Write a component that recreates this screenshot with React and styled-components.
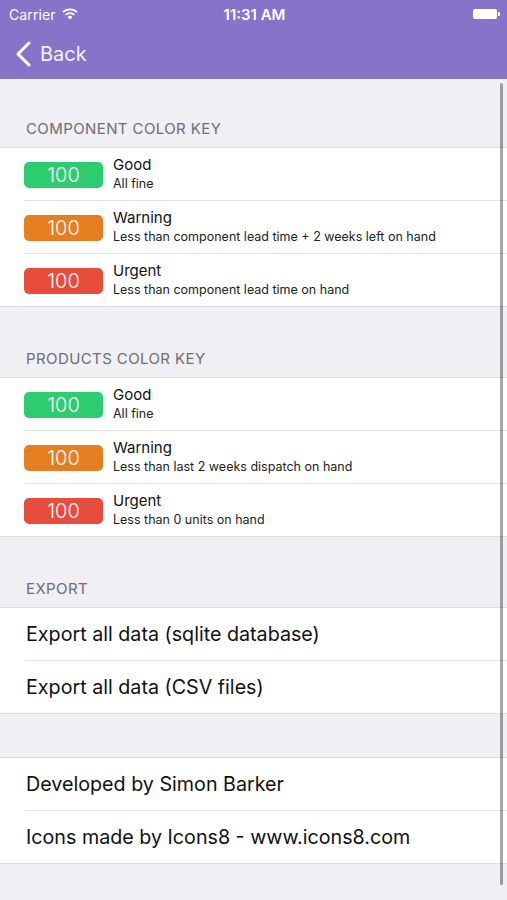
import styled, { createGlobalStyle } from "styled-components";

const GlobalStyle = createGlobalStyle`
  body {
    margin: 0;
    background: #efeff4;
    font-family: Inter, "Liberation Sans", sans-serif;
  }
`;

const componentKeys = [
  { color: "#2ecc71", title: "Good", text: "All fine" },
  {
    color: "#e67e22",
    title: "Warning",
    text: "Less than component lead time + 2 weeks left on hand",
  },
  { color: "#e74c3c", title: "Urgent", text: "Less than component lead time on hand" },
];

const productKeys = [
  { color: "#2ecc71", title: "Good", text: "All fine" },
  { color: "#e67e22", title: "Warning", text: "Less than last 2 weeks dispatch on hand" },
  { color: "#e74c3c", title: "Urgent", text: "Less than 0 units on hand" },
];

export default function App() {
  return (
    <Screen>
      <GlobalStyle />
      <Header>
        <StatusBar>
          <Carrier>
            Carrier
            <svg width="16" height="12" viewBox="0 0 16 12">
              <path
                d="M1 4.2 A10 10 0 0 1 15 4.2"
                stroke="#fff"
                strokeWidth="1.8"
                fill="none"
              />
              <path
                d="M3.6 6.8 A6.4 6.4 0 0 1 12.4 6.8"
                stroke="#fff"
                strokeWidth="1.8"
                fill="none"
              />
              <path d="M8 11.5 L5.6 9 A3.4 3.4 0 0 1 10.4 9 Z" fill="#fff" />
            </svg>
          </Carrier>
          <Time>11:31 AM</Time>
          <Battery>
            <BatteryBody />
            <BatteryTip />
          </Battery>
        </StatusBar>
        <NavBar>
          <svg width="17" height="26" viewBox="0 0 17 26">
            <path
              d="M14 2 L3 13 L14 24"
              stroke="#fff"
              strokeWidth="3"
              fill="none"
              strokeLinecap="round"
              strokeLinejoin="round"
            />
          </svg>
          <BackText>Back</BackText>
        </NavBar>
      </Header>

      <Content>
        <SectionHeader $top={40}>Component color key</SectionHeader>
        <Group>
          {componentKeys.map((k) => (
            <KeyRow key={k.title}>
              <Badge $color={k.color}>100</Badge>
              <KeyText>
                <KeyTitle>{k.title}</KeyTitle>
                <KeySub>{k.text}</KeySub>
              </KeyText>
            </KeyRow>
          ))}
        </Group>

        <SectionHeader $top={42}>Products color key</SectionHeader>
        <Group>
          {productKeys.map((k) => (
            <KeyRow key={k.title}>
              <Badge $color={k.color}>100</Badge>
              <KeyText>
                <KeyTitle>{k.title}</KeyTitle>
                <KeySub>{k.text}</KeySub>
              </KeyText>
            </KeyRow>
          ))}
        </Group>

        <SectionHeader $top={42}>Export</SectionHeader>
        <Group>
          <TextRow>Export all data (sqlite database)</TextRow>
          <TextRow>Export all data (CSV files)</TextRow>
        </Group>

        <Spacer />
        <Group>
          <TextRow>Developed by Simon Barker</TextRow>
          <TextRow>Icons made by Icons8 - www.icons8.com</TextRow>
        </Group>

        <ScrollBar />
      </Content>
    </Screen>
  );
}

const Screen = styled.div`
  width: 507px;
  height: 900px;
  overflow: hidden;
  background: #efeff4;
`;

const Header = styled.div`
  background: #8674c9;
  height: 79px;
  color: #ffffff;
`;

const StatusBar = styled.div`
  height: 28px;
  display: grid;
  grid-template-columns: 1fr auto 1fr;
  align-items: center;
  padding: 0 7px 0 9px;
  font-size: 14px;
`;

const Carrier = styled.div`
  display: flex;
  align-items: center;
  gap: 6px;
  letter-spacing: 0.1px;
`;

const Time = styled.div`
  font-weight: 600;
  font-size: 15px;
`;

const Battery = styled.div`
  justify-self: end;
  display: flex;
  align-items: center;
`;

const BatteryBody = styled.div`
  width: 24px;
  height: 10px;
  background: #ffffff;
  border-radius: 2px;
`;

const BatteryTip = styled.div`
  width: 2px;
  height: 4px;
  background: #ffffff;
  border-radius: 0 1px 1px 0;
  margin-left: 1px;
`;

const NavBar = styled.div`
  height: 51px;
  display: flex;
  align-items: center;
  padding-left: 15px;
  gap: 8px;
`;

const BackText = styled.span`
  font-size: 20px;
  color: #f4f1fb;
`;

const Content = styled.div`
  position: relative;
  height: 821px;
`;

const SectionHeader = styled.div`
  padding: ${(p) => p.$top}px 26px 8px;
  line-height: 20px;
  font-size: 15px;
  text-transform: uppercase;
  color: #6d6d72;
  letter-spacing: 0.4px;
`;

const Group = styled.div`
  background: #ffffff;
  border-top: 1px solid #dcdce0;
  border-bottom: 1px solid #dcdce0;

  & > * + * {
    border-top: 1px solid #e0e0e4;
  }
`;

const KeyRow = styled.div`
  height: 52px;
  display: flex;
  align-items: center;
  margin-left: 25px;
  gap: 10px;
`;

const Badge = styled.div`
  width: 79px;
  height: 26px;
  margin-left: -1px;
  margin-top: 1px;
  border-radius: 5px;
  background: ${(p) => p.$color};
  color: #ffffff;
  font-size: 20px;
  font-weight: 300;
  display: flex;
  align-items: center;
  justify-content: center;
`;

const KeyText = styled.div`
  display: flex;
  flex-direction: column;
  gap: 2px;
  margin-top: -2px;
`;

const KeyTitle = styled.div`
  font-size: 15px;
  color: #111111;
`;

const KeySub = styled.div`
  font-size: 12.5px;
  color: #222222;
`;

const TextRow = styled.div`
  height: 52px;
  display: flex;
  align-items: center;
  margin-left: 25px;
  padding-left: 1px;
  font-size: 19.7px;
  color: #111111;
`;

const Spacer = styled.div`
  height: 43px;
`;

const ScrollBar = styled.div`
  position: absolute;
  right: 4px;
  top: 4px;
  width: 3px;
  height: 802px;
  border-radius: 2px;
  background: rgba(0, 0, 0, 0.35);
`;
